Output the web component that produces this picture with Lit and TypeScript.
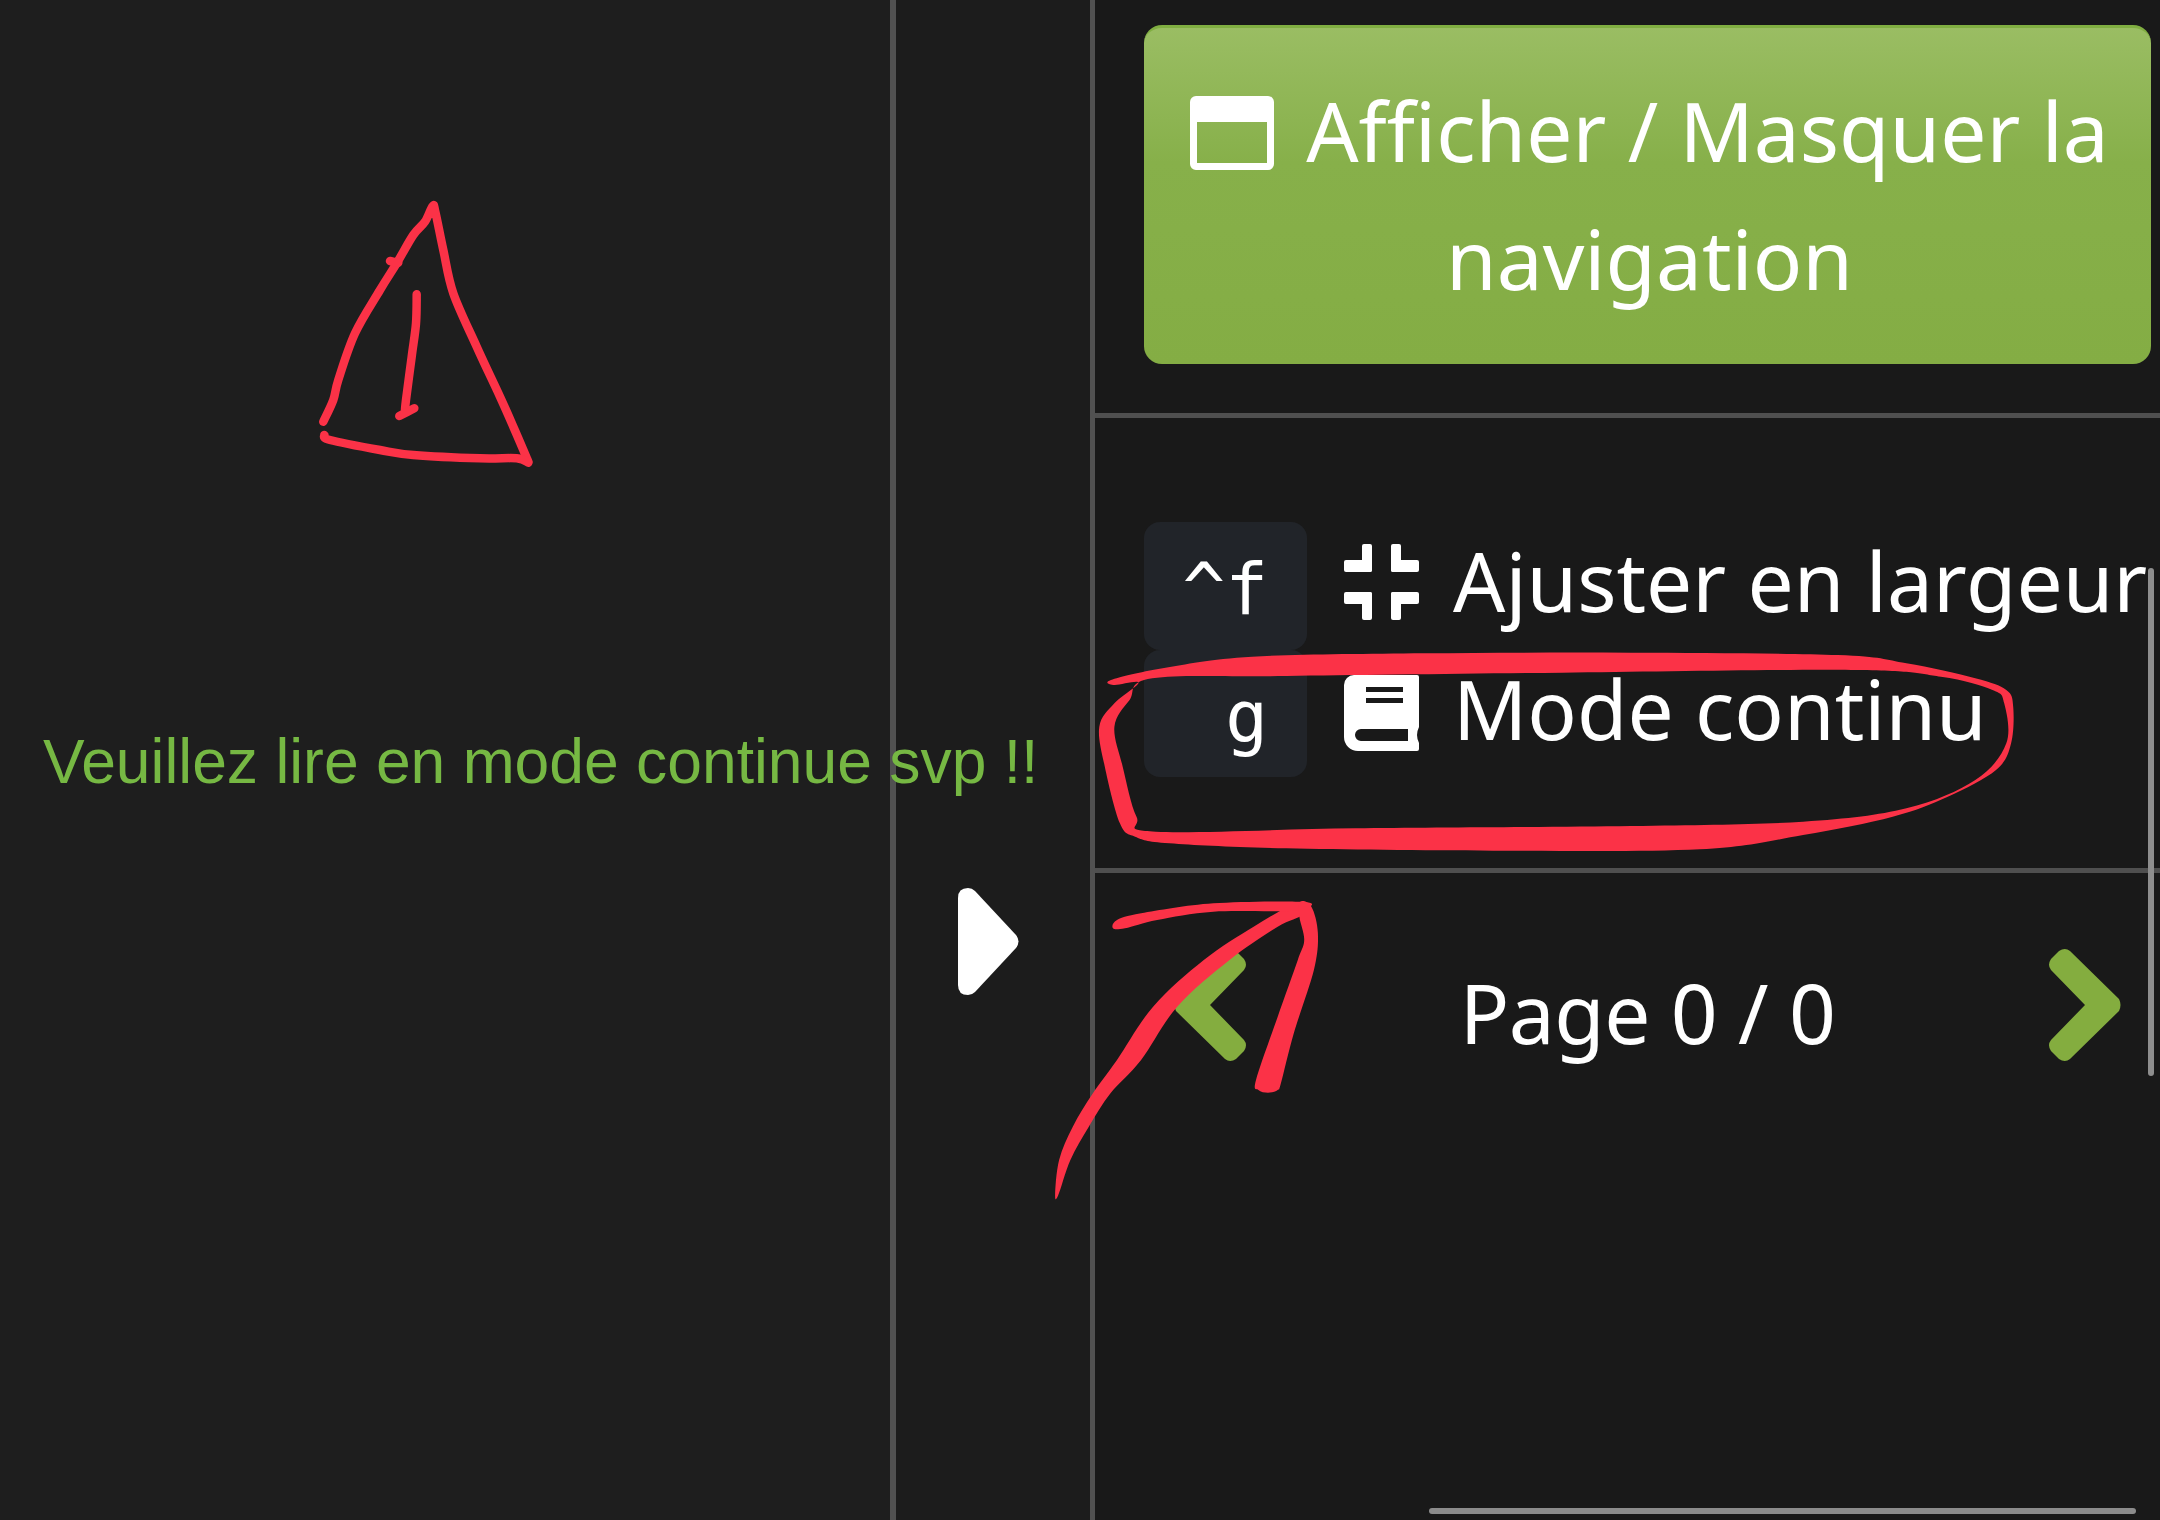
import { LitElement, html, css, svg } from "lit";
import { customElement } from "lit/decorators.js";

type P = [number, number];

function smooth(pts: P[], closed = false): string {
  const n = pts.length;
  const at = (i: number): P => (closed ? pts[(i + n) % n] : pts[Math.max(0, Math.min(n - 1, i))]);
  let d = `M${pts[0][0].toFixed(1)} ${pts[0][1].toFixed(1)}`;
  const last = closed ? n : n - 1;
  for (let i = 0; i < last; i++) {
    const p0 = at(i - 1), p1 = at(i), p2 = at(i + 1), p3 = at(i + 2);
    const c1: P = [p1[0] + (p2[0] - p0[0]) / 6, p1[1] + (p2[1] - p0[1]) / 6];
    const c2: P = [p2[0] - (p3[0] - p1[0]) / 6, p2[1] - (p3[1] - p1[1]) / 6];
    d += `C${c1[0].toFixed(1)} ${c1[1].toFixed(1)} ${c2[0].toFixed(1)} ${c2[1].toFixed(1)} ${p2[0].toFixed(1)} ${p2[1].toFixed(1)}`;
  }
  return closed ? d + "Z" : d;
}

const tri = (zs: P[]): P[] => zs.map(([x, y]) => [280 + x / 3, 180 + y / 3] as P);
const rg = (zs: P[]): P[] => zs.map(([x, y]) => [1080 + x / 1.452, 500 + y / 3] as P);
const ar = (zs: P[]): P[] => zs.map(([x, y]) => [900 + x / 1.2444, 860 + y / 3] as P);

const triangleLeft = tri([[130,725],[160,660],[175,600],[225,460],[300,330],[350,250],[400,165],[435,125],[458,78],[466,95],[490,210],[520,340],[590,500],[660,650],[700,740],[745,845]]);
const triangleBase = tri([[745,848],[710,835],[600,835],[400,825],[300,810],[150,780],[133,765]]);
const triangleBang = tri([[410,343],[408,430],[395,530],[378,660],[375,690]]);
const triangleDot = tri([[358,708],[403,685]]);
const triangleTick = tri([[330,243],[355,248]]);

const ringOuter = rg([[45,540],[120,505],[250,470],[500,460],[800,458],[1100,465],[1200,490],[1300,535],[1345,570],[1355,620],[1352,730],[1330,810],[1260,890],[1180,950],[1050,1005],[900,1048],[600,1052],[300,1045],[130,1030],[80,1010],[58,970],[36,800],[28,680],[50,610],[85,548],[50,555]]);
const ringInner = rg([[105,535],[72,600],[50,680],[62,800],[82,950],[110,995],[400,985],[800,978],[1050,965],[1200,925],[1300,840],[1345,730],[1342,610],[1325,570],[1250,530],[1120,510],[700,518],[300,528]]);

const arrowShaft = ar([[193,1005],[198,900],[215,800],[240,700],[270,600],[315,440],[378,300],[440,200],[490,135],[500,165],[470,200],[410,300],[345,440],[300,600],[262,700],[235,800],[212,900],[197,1005]]);
const arrowTop = ar([[505,126],[390,130],[300,160],[270,180],[265,205],[280,205],[320,180],[390,155],[490,152]]);
const arrowBarb = ar([[498,125],[512,140],[520,220],[515,330],[490,520],[474,670],[470,690],[458,698],[446,690],[443,660],[470,470],[495,300],[503,240],[497,170]]);

@customElement("app-root")
export class AppRoot extends LitElement {
  static styles = css`
    :host { display: block; width: 2160px; height: 1520px; position: relative; overflow: hidden; background: #1e1e1e; }
    .shell { display: grid; grid-template-columns: 890px 6px 194px 5px 1065px; height: 1520px; }
    .reader { position: relative; z-index: 1; display: flex; align-items: flex-start; padding-top: 725px; padding-left: 43px; box-sizing: border-box; min-width: 0; }
    .notice { margin: 0; font: 62.4px/1.2 "Liberation Sans", Arial, sans-serif; color: #76b843; white-space: nowrap; }
    .rule { background: #515151; }
    .gutter { background: #1c1c1c; display: flex; justify-content: flex-start; padding: 888px 0 0 62px; box-sizing: border-box; }
    .gutter svg { width: 61px; height: 107px; }
    .side { background: #191919; color: #fff; font-family: "Noto Sans", sans-serif; font-size: 82px; overflow: hidden; }
    .top { padding: 25px 9px 49px 49px; border-bottom: 5px solid #4f4f4f; }
    .toggle { box-sizing: border-box; height: 339px; border-radius: 18px; border-top: 3px solid #80ae41; background: linear-gradient(#9abd63, #87b04a 40%, #84ad44); line-height: 128px; padding: 38px 0 0 4px; text-align: center; }
    .toggle svg { width: 84px; height: 74px; margin-right: 32px; vertical-align: -8px; }
    .modes { padding: 104px 0 91px 49px; border-bottom: 5px solid #4f4f4f; display: grid; grid-template-columns: 163px 75px max-content; column-gap: 37px; grid-auto-rows: 127.5px; align-items: center; }
    kbd { box-sizing: border-box; height: 100%; background: #212429; border-radius: 16px; padding: 0 39px 0 0; font: 71px/135px "DejaVu Sans Mono", monospace; text-align: right; }
    .modes svg { width: 75px; height: 76px; }
    .modes .fit { margin-top: -8px; }
    .label { line-height: 127px; white-space: nowrap; margin-left: -3px; padding-bottom: 10px; }
    .pager { display: flex; justify-content: space-between; align-items: center; padding: 75px 38px 0 78px; height: 114px; }
    .pager svg { width: 74px; height: 114px; }
    .page { letter-spacing: -0.5px; line-height: 114px; margin-top: 14px; }
    .vbar { position: absolute; left: 2148px; top: 568px; width: 6px; height: 508px; border-radius: 3px; background: #8e8e8e; z-index: 2; }
    .hbar { position: absolute; left: 1429px; top: 1508px; width: 707px; height: 6px; border-radius: 3px; background: #8c8c8c; z-index: 2; }
    .ink { position: absolute; left: 0; top: 0; width: 2160px; height: 1520px; pointer-events: none; z-index: 3; }
    .ink .line { fill: none; stroke: #fb3247; stroke-width: 8.5; stroke-linecap: round; stroke-linejoin: round; }
    .ink .fill { fill: #fb3247; }
  `;

  render() {
    return html`
      <div class="shell">
        <section class="reader"><p class="notice">Veuillez lire en mode continue svp !!</p></section>
        <div class="rule"></div>
        <div class="gutter">
          <svg viewBox="0 0 61 107"><path fill="#fff" d="M0 10Q0 0 10 0Q14 0 17 3L58 47Q63 53.5 58 60L17 104Q14 107 10 107Q0 107 0 97Z"/></svg>
        </div>
        <div class="rule"></div>
        <aside class="side">
          <div class="top">
            <div class="toggle">
              <svg viewBox="0 0 84 74"><path fill="#fff" fill-rule="evenodd" d="M6 0H78A6 6 0 0 1 84 6V68A6 6 0 0 1 78 74H6A6 6 0 0 1 0 68V6A6 6 0 0 1 6 0ZM7 26V67H77V26Z"/></svg>Afficher / Masquer la navigation
            </div>
          </div>
          <div class="modes">
            <kbd>^f</kbd>
            <svg class="fit" viewBox="0 0 75 76" fill="#fff">
              <rect x="18" y="0" width="10" height="28" rx="2"/><rect x="0" y="16" width="28" height="12" rx="2"/>
              <rect x="47" y="0" width="10" height="28" rx="2"/><rect x="47" y="16" width="28" height="12" rx="2"/>
              <rect x="18" y="48" width="10" height="28" rx="2"/><rect x="0" y="48" width="28" height="12" rx="2"/>
              <rect x="47" y="48" width="10" height="28" rx="2"/><rect x="47" y="48" width="28" height="12" rx="2"/>
            </svg>
            <span class="label">Ajuster en largeur</span>
            <kbd>g</kbd>
            <svg viewBox="0 0 75 76"><path fill="#fff" fill-rule="evenodd" d="M10 0H73A2 2 0 0 1 75 2V52Q71 60 75 68V74A2 2 0 0 1 73 76H14A14 14 0 0 1 0 62V10A10 10 0 0 1 10 0ZM22 12V17H59V12ZM22 23V28H59V23ZM17 54A6 6 0 0 0 17 66H64V54Z"/></svg>
            <span class="label">Mode continu</span>
          </div>
          <div class="pager">
            <svg viewBox="0 0 74 114"><path fill="#84ad3f" d="M71 11L63 3Q57 -1 52 3L3 51Q0 57 3 63L52 111Q57 115 63 111L71 103Q75 97 71 92L37 57L71 22Q75 17 71 11Z"/></svg>
            <span class="page">Page 0 / 0</span>
            <svg viewBox="0 0 74 114"><path fill="#84ad3f" d="M3 11L11 3Q17 -1 22 3L71 51Q74 57 71 63L22 111Q17 115 11 111L3 103Q-1 97 3 92L37 57L3 22Q-1 17 3 11Z"/></svg>
          </div>
        </aside>
      </div>
      <div class="vbar"></div>
      <div class="hbar"></div>
      <svg class="ink" viewBox="0 0 2160 1520">
        ${[triangleLeft, triangleBase, triangleBang, triangleDot, triangleTick].map((p) => svg`<path class="line" d=${smooth(p)}/>`)}
        <path class="fill" fill-rule="evenodd" d=${smooth(ringOuter, true) + smooth(ringInner, true)}/>
        <path class="fill" d=${smooth(arrowShaft, true)}/>
        <path class="fill" d=${smooth(arrowTop, true)}/>
        <path class="fill" d=${smooth(arrowBarb, true)}/>
      </svg>
    `;
  }
}
